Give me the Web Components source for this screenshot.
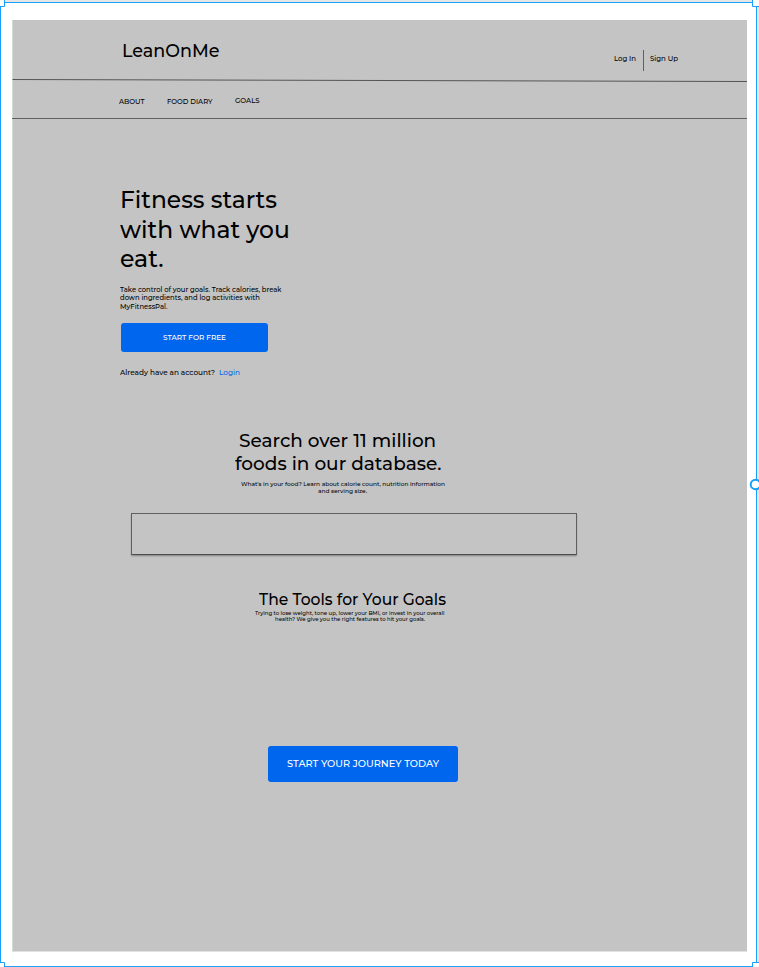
<!DOCTYPE html>
<html lang="en">
<head>
<meta charset="utf-8">
<title>LeanOnMe</title>
<style>
html,body{margin:0;height:967px;overflow:hidden;background:#fff}
body{font-family:Montserrat,Inter,"Liberation Sans",sans-serif;font-weight:500;color:#000}
</style>
</head>
<body>
<lean-page></lean-page>
<script>
// One line of text, stretched horizontally to the width given in "w".
class FitLine extends HTMLElement{
  connectedCallback(){
    const r=this.attachShadow({mode:'open'});
    r.innerHTML=`<style>:host{display:block;white-space:nowrap;flex:none}
      span{display:inline-block;vertical-align:top;line-height:inherit;transform-origin:0 50%}</style><span><slot></slot></span>`;
    const w=+this.getAttribute('w'), s=r.querySelector('span');
    this.style.width=w+'px';
    s.style.transform='scaleX('+(w/s.getBoundingClientRect().width)+')';
  }
}
class BlueButton extends HTMLElement{
  connectedCallback(){
    this.attachShadow({mode:'open'}).innerHTML=`<style>:host{display:flex;align-items:center;justify-content:center;box-sizing:border-box;
      background:#0066ee;color:#fff;border-radius:3px}</style><slot></slot>`;
  }
}
class SiteHeader extends HTMLElement{
  connectedCallback(){
    this.attachShadow({mode:'open'}).innerHTML=`<style>
      :host{display:block;height:99px}
      .top{display:flex;height:59px;box-sizing:border-box;padding:18px 69px 0 109.5px;justify-content:space-between}
      .brand{font-size:18px;line-height:24px;padding-top:1px}
      .auth{display:flex;font-size:7px;line-height:10px;padding-top:12px;height:20px}
      .auth fit-line{margin-top:3.6px}
      i{width:1px;height:21px;background:#606060;margin:0 6px 0 7px}
      svg{display:block;width:735px;height:4px}
      nav{display:flex;padding:13.6px 0 0 106.6px;height:21.4px;font-size:7px;line-height:10px}
      .foot{height:1px;background:#606060}
      </style>
      <div class="top"><fit-line class="brand" w="97.5">LeanOnMe</fit-line>
      <div class="auth"><fit-line w="22">Log In</fit-line><i></i><fit-line w="28">Sign Up</fit-line></div></div>
      <svg viewBox="0 0 735 4"><path d="M0.5 .5L735 2.5" stroke="#555" stroke-width="1"/></svg>
      <nav><fit-line w="25.5">ABOUT</fit-line><fit-line w="45.5" style="margin-left:23px">FOOD DIARY</fit-line><fit-line w="24.5" style="margin:-.6px 0 0 22px">GOALS</fit-line></nav>
      <div class="foot"></div>`;
  }
}
class HeroBlock extends HTMLElement{
  connectedCallback(){
    this.attachShadow({mode:'open'}).innerHTML=`<style>
      :host{display:block;padding:66px 0 0 108.5px;height:246px}
      h1{margin:0 0 0 -.1px;font-size:24.2px;line-height:29.6px;font-weight:500}
      p{margin:12px 0 0;font-size:7px;line-height:8.6px}
      blue-button{width:147.5px;height:29px;margin-top:11.8px;font-size:7px;line-height:10px}
      .login{display:flex;gap:4px;margin-top:15.5px;font-size:7.3px;line-height:10px}
      fit-line{margin-left:-.3px}
      a{color:#0066ee}
      </style>
      <h1><fit-line w="157">Fitness starts</fit-line><fit-line w="169.8">with what you</fit-line><fit-line w="43.5">eat.</fit-line></h1>
      <p><fit-line w="161.5">Take control of your goals. Track calories, break</fit-line><fit-line w="140">down ingredients, and log activities with</fit-line><fit-line w="47.5">MyFitnessPal.</fit-line></p>
      <blue-button><fit-line w="63">START FOR FREE</fit-line></blue-button>
      <div class="login"><fit-line w="95">Already have an account?</fit-line><a><fit-line w="21">Login</fit-line></a></div>`;
  }
}
class FoodSearch extends HTMLElement{
  connectedCallback(){
    this.attachShadow({mode:'open'}).innerHTML=`<style>
      :host{display:block;height:161px}
      h2,p{margin:0;display:flex;flex-direction:column;align-items:center}
      h2{width:206.5px;margin-left:222.6px;font-size:19px;line-height:23px;font-weight:500}
      p{width:204px;margin:5.8px 0 0 228.5px;font-size:6px;line-height:7.5px}
      .field{box-sizing:border-box;width:446px;height:42px;margin:17.2px 0 0 119px;border:1px solid #606060;border-bottom-color:#4c4c4c;box-shadow:0 1.5px 1.5px rgba(0,0,0,.25)}
      </style>
      <h2><fit-line w="197.2">Search over 11 million</fit-line><fit-line w="206.5">foods in our database.</fit-line></h2>
      <p><fit-line w="204">What's in your food? Learn about calorie count, nutrition information</fit-line><fit-line w="49">and serving size.</fit-line></p>
      <div class="field"></div>`;
  }
}
class GoalTools extends HTMLElement{
  connectedCallback(){
    this.attachShadow({mode:'open'}).innerHTML=`<style>
      :host{display:block}
      h2{margin:-.8px 0 0 246.7px;font-size:16.2px;line-height:20px;font-weight:500}
      p{display:flex;flex-direction:column;align-items:center;width:189.5px;margin:1px 0 0 243px;font-size:5.3px;line-height:6.4px}
      blue-button{width:190px;height:35.5px;margin:123.2px 0 0 256px;font-size:10px;line-height:14px}
      </style>
      <h2><fit-line w="187">The Tools for Your Goals</fit-line></h2>
      <p><fit-line w="189.5">Trying to lose weight, tone up, lower your BMI, or invest in your overall</fit-line><fit-line w="150">health? We give you the right features to hit your goals.</fit-line></p>
      <blue-button><fit-line w="152" style="padding-top:.6px">START YOUR JOURNEY TODAY</fit-line></blue-button>`;
  }
}
// Selection outline with corner and side handles, laid over the artboard.
class SelectionFrame extends HTMLElement{
  connectedCallback(){
    this.attachShadow({mode:'open'}).innerHTML=`<style>:host{position:absolute;inset:0;pointer-events:none}svg{display:block}</style>
      <svg width="759" height="967" viewBox="0 0 759 967" fill="none" stroke="#18a0fb">
      <path d="M5 0H752V2H5ZM757 7H759V962H757Z" fill="#e5e5e5" stroke="none"/>
      <path d="M4 2.5H753M.5 6V963M756.5 6V963M4 966.5H753"/>
      <path d="M4.5 0V6.5H0M752.5 0V6.5H759M0 962.5H4.5V967M759 962.5H752.5V967"/>
      <circle cx="755.5" cy="484.5" r="4.8" fill="#fff" stroke-width="2"/></svg>`;
  }
}
class LeanPage extends HTMLElement{
  connectedCallback(){
    this.attachShadow({mode:'open'}).innerHTML=`<style>
      :host{display:block;position:relative;box-sizing:border-box;width:759px;height:967px;padding:20px 12px 0;overflow:hidden}
      main{box-sizing:border-box;display:flow-root;width:735px;height:932px;background:#c4c4c4;border-bottom:1px solid #e1e1e1;box-shadow:inset 1px 0 #d8d8d8}
      hero-block,food-search,site-header{box-sizing:border-box}
      </style>
      <main><site-header></site-header><hero-block></hero-block>
      <food-search style="margin-top:63.8px"></food-search><goal-tools></goal-tools></main>
      <selection-frame></selection-frame>`;
  }
}
customElements.define('fit-line',FitLine);
customElements.define('blue-button',BlueButton);
customElements.define('site-header',SiteHeader);
customElements.define('hero-block',HeroBlock);
customElements.define('food-search',FoodSearch);
customElements.define('goal-tools',GoalTools);
customElements.define('selection-frame',SelectionFrame);
customElements.define('lean-page',LeanPage);
</script>
</body>
</html>
